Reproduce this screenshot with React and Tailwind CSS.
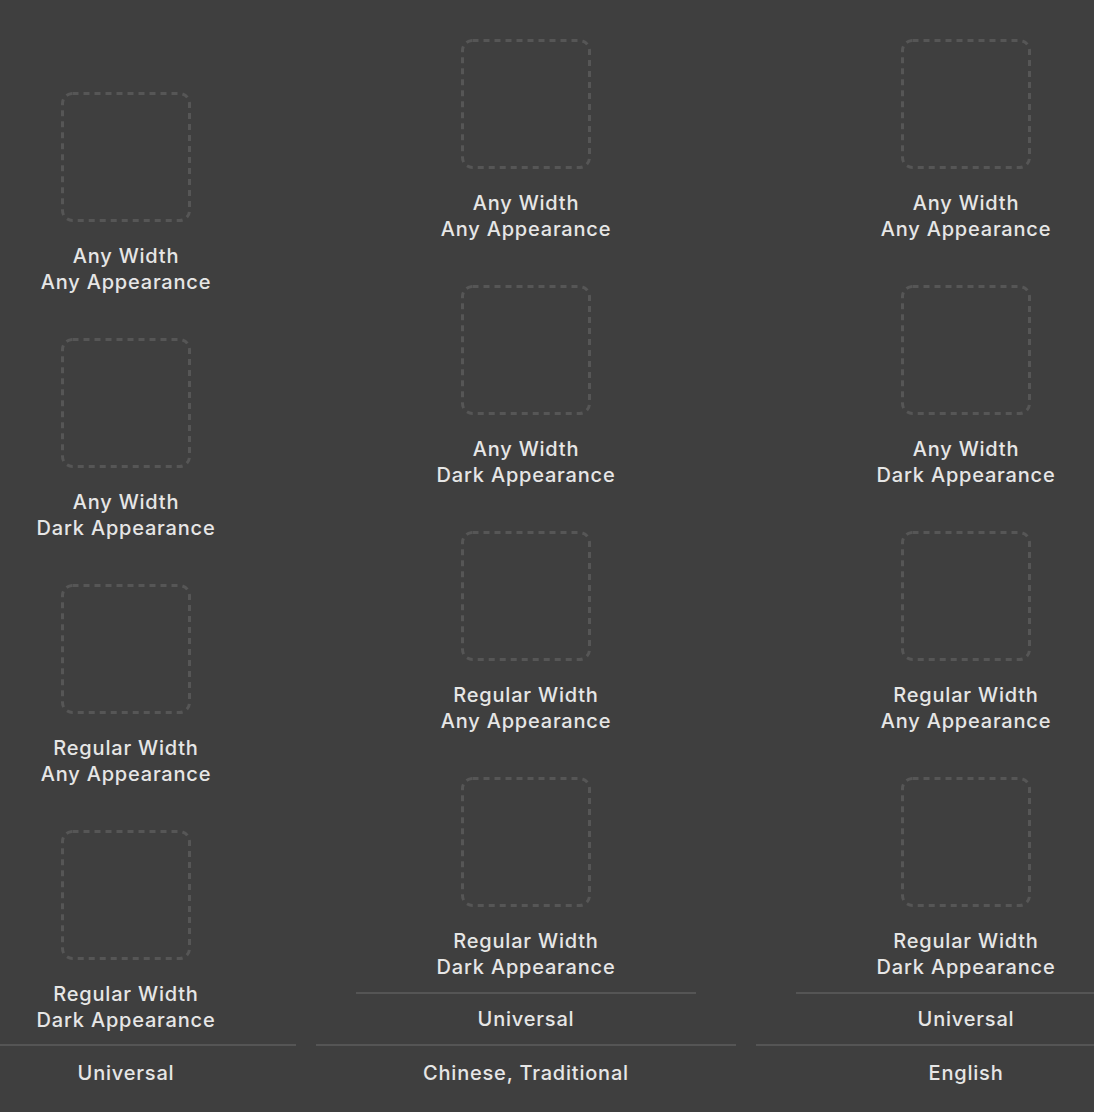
const slots = [
  ['Any Width', 'Any Appearance'],
  ['Any Width', 'Dark Appearance'],
  ['Regular Width', 'Any Appearance'],
  ['Regular Width', 'Dark Appearance'],
];

function Well() {
  return (
    <svg width="132" height="132" viewBox="0 0 132 132" className="block">
      <rect x="2.5" y="2.5" width="127" height="127" rx="10" fill="none" stroke="#565656" strokeWidth="3" strokeDasharray="6 5" />
    </svg>
  );
}

function Slot({ lines }) {
  return (
    <div className="flex flex-col items-center">
      <Well />
      <div className="mt-[20px] text-center text-[20px] leading-[26px] tracking-[0.8px] font-medium text-[#e6e6e6]">
        <div>{lines[0]}</div>
        <div>{lines[1]}</div>
      </div>
    </div>
  );
}

function Group({ label }) {
  return (
    <div className="w-[340px] flex flex-col items-center">
      <div className="flex flex-col items-center gap-[42px] pb-[12px]">
        {slots.map((s, i) => (
          <Slot key={i} lines={s} />
        ))}
      </div>
      <div className="w-full h-[2px] bg-[#555555]" />
      <div className="h-[50px] flex items-center justify-center text-[20px] tracking-[0.8px] font-medium text-[#e6e6e6]">{label}</div>
    </div>
  );
}

function Column({ label, children }) {
  return (
    <div className="flex flex-col items-center shrink-0">
      {children}
      <div className="w-full h-[2px] bg-[#555555]" />
      <div className="h-[53px] flex items-center justify-center text-[20px] tracking-[0.8px] font-medium text-[#e6e6e6]">{label}</div>
    </div>
  );
}

export default function App() {
  return (
    <div className="w-[1094px] h-[1112px] overflow-hidden bg-[#3f3f3f]" style={{ fontFamily: 'Inter, "Noto Sans", sans-serif' }}>
      <div className="flex items-end gap-[20px] ml-[-44px] h-[1099px]">
        <Column label="Universal">
          <div className="w-[340px] flex flex-col items-center gap-[42px] pb-[11px]">
            {slots.map((s, i) => (
              <Slot key={i} lines={s} />
            ))}
          </div>
        </Column>
        <Column label="Chinese, Traditional">
          <div className="w-[420px] flex justify-center">
            <Group label="Universal" />
          </div>
        </Column>
        <Column label="English">
          <div className="w-[420px] flex justify-center">
            <Group label="Universal" />
          </div>
        </Column>
      </div>
    </div>
  );
}
